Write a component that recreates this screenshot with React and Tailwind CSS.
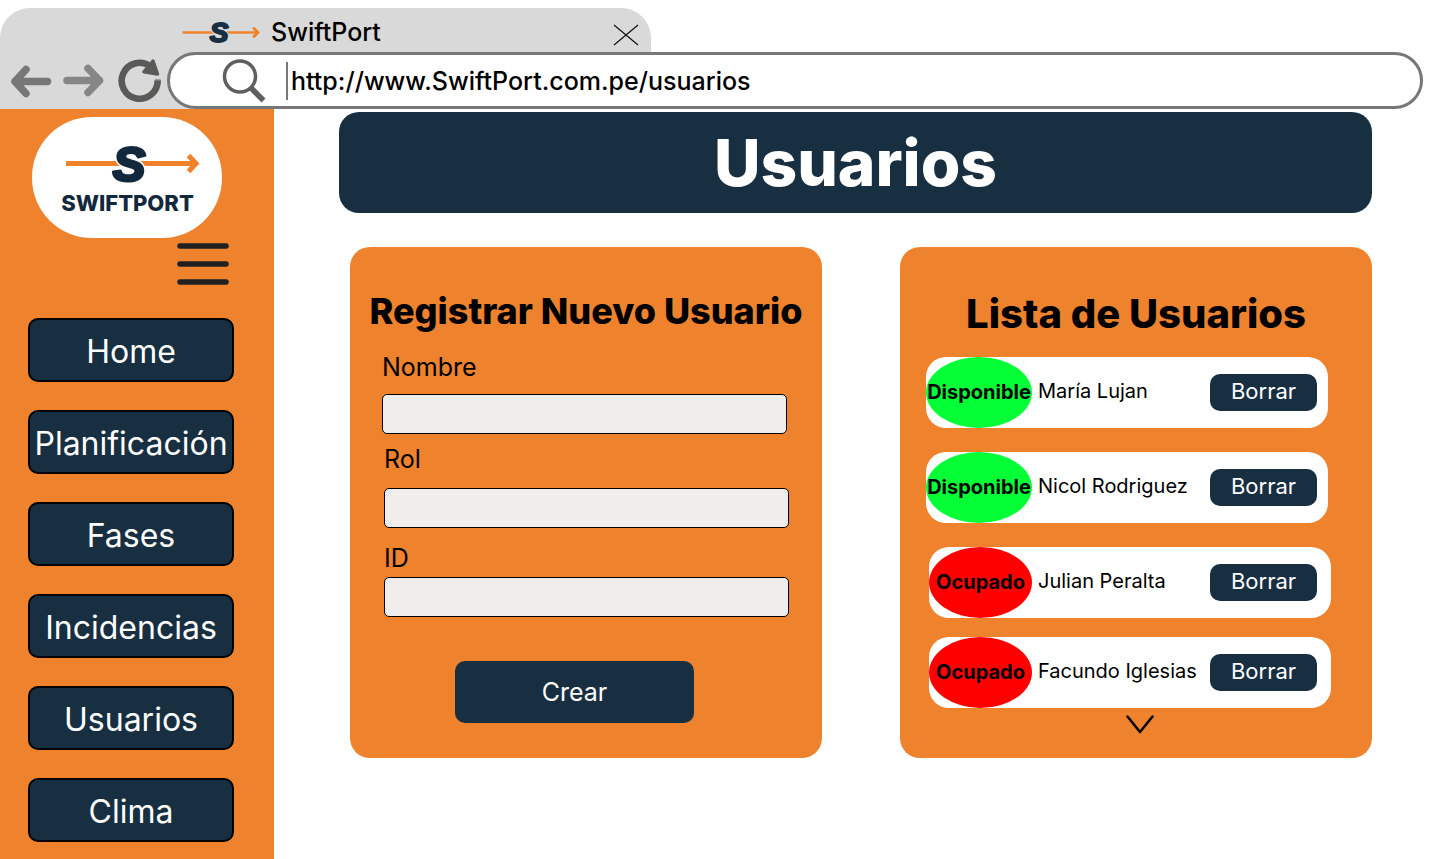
const navItems = ['Home', 'Planificación', 'Fases', 'Incidencias', 'Usuarios', 'Clima'];

const fields = [
  { id: 'nombre', label: 'Nombre', className: 'gap-3' },
  { id: 'rol', label: 'Rol', className: 'ml-0.5 mt-2.5 gap-3.5' },
  { id: 'codigo', label: 'ID', className: 'ml-0.5 mt-[15px] gap-1' },
];

const users = [
  { name: 'María Lujan', status: 'Disponible' },
  { name: 'Nicol Rodriguez', status: 'Disponible' },
  { name: 'Julian Peralta', status: 'Ocupado' },
  { name: 'Facundo Iglesias', status: 'Ocupado' },
];

const statusStyles = {
  Disponible: { row: 'mb-6 pr-[11px]', badge: 'w-[106px] bg-[#05ff37]' },
  Ocupado: { row: 'mb-[19px] ml-[3px] -mr-[3px] pr-[14px]', badge: 'w-[103px] bg-[#ff0000]' },
};

function TabLogo() {
  return (
    <svg width="78" height="40" viewBox="0 0 78 40" aria-hidden="true">
      <path d="M0.500 20.500H76" stroke="#f0822b" strokeWidth="2.600" />
      <path d="M72 16.500L76 20.500L72 24.500" fill="none" stroke="#f0822b" strokeWidth="3" strokeLinecap="round" />
      <g fontFamily="'Liberation Sans', sans-serif" fontWeight="700" fontStyle="italic" fontSize="28" textAnchor="middle" strokeLinejoin="round">
        <text x="37" y="30" fill="#d9d9d9" stroke="#d9d9d9" strokeWidth="4" aria-hidden="true">S</text>
        <text x="37" y="30" fill="#182e41" stroke="#182e41" strokeWidth="2">S</text>
      </g>
    </svg>
  );
}

function SidebarLogo() {
  return (
    <svg width="190" height="121" viewBox="0 0 190 121" role="img" aria-label="SwiftPort">
      <path d="M34 46.500H162" stroke="#f0822b" strokeWidth="5" />
      <path d="M156.500 38.500L164 46.500L156.500 54.500" fill="none" stroke="#f0822b" strokeWidth="5" />
      <g fontFamily="'Liberation Sans', sans-serif" fontWeight="700" fontStyle="italic" fontSize="49" textAnchor="middle" strokeLinejoin="round">
        <text x="97" y="64" fill="#fff" stroke="#fff" strokeWidth="6" aria-hidden="true">S</text>
        <text x="97" y="64" fill="#12293d" stroke="#12293d" strokeWidth="3">S</text>
      </g>
      <text x="95.500" y="94" textAnchor="middle" fontFamily="Inter, sans-serif" fontWeight="800" fontSize="22" fill="#12293d">SWIFTPORT</text>
    </svg>
  );
}

function BrowserBar() {
  return (
    <header>
      <div className="mt-2 flex h-11 w-[651px] items-center rounded-t-[30px] bg-[#d9d9d9] pl-[182px] pr-3 pt-1">
        <TabLogo />
        <span className="ml-[11px] text-[25px] font-medium leading-[30px]">SwiftPort</span>
        <button type="button" aria-label="Cerrar" className="ml-auto mt-1.5">
          <svg width="26" height="22" viewBox="0 0 26 22" fill="none" stroke="#111" strokeWidth="1.2">
            <path d="M1 1L25 21M25 1L1 21" />
          </svg>
        </button>
      </div>
      <div className="flex">
        <div className="flex w-[200px] items-center bg-[#d9d9d9] pl-[11px]">
          <button type="button" aria-label="Atrás">
            <svg width="41" height="34" viewBox="0 0 41 34" fill="none" stroke="#777" strokeWidth="7.500" strokeLinecap="round" strokeLinejoin="round">
              <path d="M36.500 17.500H4M15 5.500L4 17.500L15 29.500" />
            </svg>
          </button>
          <button type="button" aria-label="Adelante" className="ml-[11px]">
            <svg width="41" height="34" viewBox="0 0 41 34" fill="none" stroke="#868686" strokeWidth="7.500" strokeLinecap="round" strokeLinejoin="round">
              <path d="M4 16.500H36.500M25 4.500L36.500 16.500L25 28.500" />
            </svg>
          </button>
          <button type="button" aria-label="Recargar" className="ml-3.5">
            <svg width="44" height="44" viewBox="0 0 44 44">
              <path d="M39.700 21.500A18 18 0 1 1 32 7" fill="none" stroke="#5a5a58" strokeWidth="6.600" />
              <path d="M36.400 21.500Q36.400 20.500 37.500 20.500H42Q43 20.500 43 21.500Z" fill="#5a5a58" />
              <path d="M35 2L39.500 15L26 12.800Z" fill="#5a5a58" stroke="#5a5a58" strokeWidth="3.500" strokeLinejoin="round" />
            </svg>
          </button>
        </div>
        <div className="-ml-[33px] mr-[17px] flex h-[57px] flex-1 items-center rounded-full border-[3px] border-[#777] bg-white pl-[52px]">
          <svg width="44" height="44" viewBox="0 0 44 44" fill="none" stroke="#5f5f5f" aria-hidden="true">
            <circle cx="18" cy="17.500" r="15.500" strokeWidth="3.500" />
            <path d="M28.500 28.500L41.500 41.500" strokeWidth="5.500" />
          </svg>
          <input
            type="text"
            aria-label="Dirección"
            defaultValue="http://www.SwiftPort.com.pe/usuarios"
            className="ml-5 mr-8 h-[38px] min-w-0 flex-1 border-l-2 border-[#777] bg-white pl-[3px] text-[25px] font-medium leading-[30px] outline-none"
          />
        </div>
      </div>
    </header>
  );
}

function Sidebar() {
  return (
    <aside className="w-[274px] shrink-0 bg-[#ee822d] pt-2">
      <div className="ml-8 h-[121px] w-[190px] rounded-[60px] bg-white">
        <SidebarLogo />
      </div>
      <button type="button" aria-label="Menú" className="ml-[177px] mt-1 block">
        <svg width="52" height="44" viewBox="0 0 52 44" stroke="#202020" strokeWidth="5.500" strokeLinecap="round">
          <path d="M3 4H49M3 22H49M3 40H49" />
        </svg>
      </button>
      <nav className="ml-7 mt-8 flex w-[206px] flex-col gap-7 pb-4">
        {navItems.map((item) => (
          <a
            key={item}
            href={`#${item.toLowerCase()}`}
            className="flex h-16 items-center justify-center rounded-[10px] border-2 border-black bg-[#182e41] pt-1 text-[32px] leading-10 text-white"
          >
            {item}
          </a>
        ))}
      </nav>
    </aside>
  );
}

function RegisterCard() {
  return (
    <section className="flex h-[511px] min-w-0 flex-1 flex-col rounded-[20px] bg-[#ee822d] pt-10">
      <h2 className="whitespace-nowrap text-center text-[36px] font-extrabold leading-[48px]">Registrar Nuevo Usuario</h2>
      <form className="mt-[17px] flex flex-col px-8" onSubmit={(event) => event.preventDefault()}>
        {fields.map((field) => (
          <div key={field.id} className={`flex max-w-[405px] flex-col ${field.className}`}>
            <label htmlFor={field.id} className="text-[25px] leading-[30px]">{field.label}</label>
            <input id={field.id} type="text" className="h-10 rounded-[5px] border border-black bg-[#efeeec] px-3 text-xl" />
          </div>
        ))}
        <button type="submit" className="ml-[73px] mt-11 h-[62px] w-[239px] rounded-[10px] bg-[#182e41] text-[25px] leading-[30px] text-white">
          Crear
        </button>
      </form>
    </section>
  );
}

function UserListCard() {
  return (
    <section className="flex h-[511px] min-w-0 flex-1 flex-col rounded-[20px] bg-[#ee822d] pt-[43px]">
      <h2 className="whitespace-nowrap text-center text-[40px] font-extrabold leading-[48px]">Lista de Usuarios</h2>
      <ul className="mt-[19px] pl-[26px] pr-11">
        {users.map((user) => (
          <li key={user.name} className={`flex h-[71px] items-center rounded-[20px] bg-white ${statusStyles[user.status].row}`}>
            <span className={`flex h-[71px] shrink-0 items-center justify-center rounded-[50%] pb-0.5 text-xl font-bold ${statusStyles[user.status].badge}`}>
              {user.status}
            </span>
            <span className="ml-1.5 whitespace-nowrap pb-1 text-xl">{user.name}</span>
            <button type="button" className="ml-auto h-[37px] w-[107px] rounded-[10px] bg-[#182e41] pb-1 text-[22px] leading-7 text-white">
              Borrar
            </button>
          </li>
        ))}
      </ul>
      <button type="button" aria-label="Ver más" className="-mt-3 self-center pl-2">
        <svg width="28" height="19" viewBox="0 0 28 19" fill="none" stroke="#000" strokeWidth="2.500" strokeLinecap="round" strokeLinejoin="round">
          <path d="M1.500 1.500L14 17L26.500 1.500" />
        </svg>
      </button>
    </section>
  );
}

export default function App() {
  return (
    <div className="flex min-h-screen flex-col bg-white font-['Inter',sans-serif] text-black">
      <BrowserBar />
      <div className="flex flex-1">
        <Sidebar />
        <main className="min-w-0 flex-1 pl-[65px] pr-[68px] pt-[3px]">
          <h1 className="flex h-[101px] items-center justify-center rounded-[20px] bg-[#182e41] text-[64px] font-extrabold leading-none text-white">
            Usuarios
          </h1>
          <div className="mt-[34px] flex gap-[78px] pl-[11px]">
            <RegisterCard />
            <UserListCard />
          </div>
        </main>
      </div>
    </div>
  );
}
